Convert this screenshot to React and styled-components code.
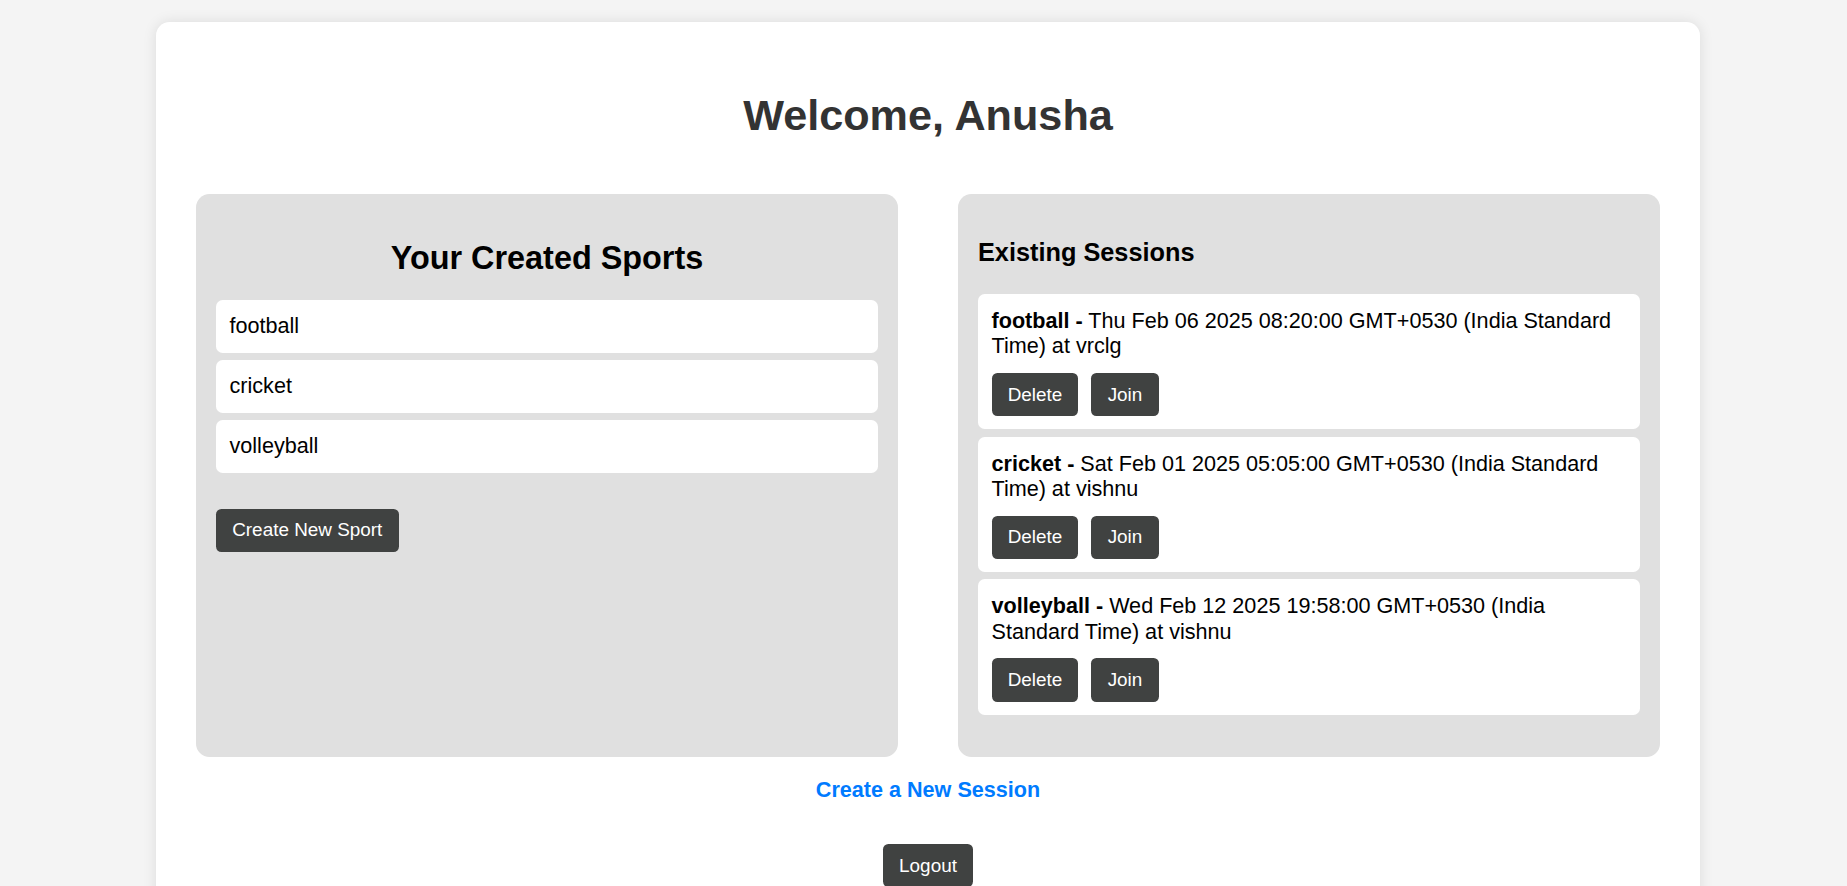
import styled, { createGlobalStyle } from "styled-components";

const GlobalStyle = createGlobalStyle`
  body {
    margin: 0;
    background: #f4f4f4;
    font-family: "Liberation Sans", Arial, sans-serif;
    font-size: 21.6px;
    line-height: 24.8px;
    color: #000;
  }
`;

const Card = styled.div`
  margin: 22px 147px 0 156px;
  padding: 40px;
  background: #fff;
  border-radius: 13.5px;
  box-shadow: 0 0 14px rgba(0, 0, 0, 0.1);
`;

const Title = styled.h1`
  margin: 29px 0 0;
  font-size: 43.2px;
  line-height: 49.6px;
  color: #333;
  text-align: center;
`;

const Columns = styled.div`
  display: flex;
  gap: 60px;
  margin-top: 53.4px;
`;

const Panel = styled.section`
  flex: 1;
  min-width: 0;
  background: #e0e0e0;
  border-radius: 13.5px;
  padding: 20px;
`;

const PanelTitle = styled.h2`
  margin: 26.4px 0 22.7px;
  font-size: 32.4px;
  line-height: 37.2px;
  text-align: center;
`;

const SubTitle = styled.h3`
  margin: 24.4px 0 26.5px;
  font-size: 25.3px;
  line-height: 29px;
`;

const SportList = styled.ul`
  list-style: none;
  margin: 0;
  padding: 0;
`;

const SportItem = styled.li`
  background: #fff;
  border-radius: 6.75px;
  padding: 14px 13.5px;
  margin-bottom: 7.2px;
`;

const Button = styled.button`
  background: #404241;
  color: #fff;
  border: none;
  border-radius: 5.4px;
  padding: 10.8px 16.2px;
  font-family: "Liberation Sans", Arial, sans-serif;
  font-size: 18.9px;
  line-height: 21.7px;
  cursor: pointer;
  margin-top: ${p => p.$top || 0}px;
`;

const SessionList = styled.div`
  padding-bottom: 14.5px;
`;

const Session = styled.div`
  background: #fff;
  border-radius: 6.75px;
  padding: 14px 13.5px 13px;
  margin-bottom: 7.5px;
`;

const SessionText = styled.div`
  line-height: 25.5px;
`;

const Actions = styled.div`
  display: flex;
  gap: 13px;
  margin-top: 14px;
`;

const NewSessionLink = styled.a`
  display: block;
  margin-top: 21.5px;
  text-align: center;
  font-weight: bold;
  color: #007bff;
  text-decoration: none;
  cursor: pointer;
`;

const Footer = styled.div`
  display: flex;
  justify-content: center;
  margin-top: 41px;
`;

const sports = ["football", "cricket", "volleyball"];

const sessions = [
  { sport: "football", date: "Thu Feb 06 2025 08:20:00 GMT+0530 (India Standard Time)", place: "vrclg" },
  { sport: "cricket", date: "Sat Feb 01 2025 05:05:00 GMT+0530 (India Standard Time)", place: "vishnu" },
  { sport: "volleyball", date: "Wed Feb 12 2025 19:58:00 GMT+0530 (India Standard Time)", place: "vishnu" },
];

export default function App() {
  return (
    <>
      <GlobalStyle />
      <Card>
        <Title>Welcome, Anusha</Title>
        <Columns>
          <Panel>
            <PanelTitle>Your Created Sports</PanelTitle>
            <SportList>
              {sports.map(s => (
                <SportItem key={s}>{s}</SportItem>
              ))}
            </SportList>
            <Button $top={28.3}>Create New Sport</Button>
          </Panel>
          <Panel>
            <SubTitle>Existing Sessions</SubTitle>
            <SessionList>
              {sessions.map(s => (
                <Session key={s.sport}>
                  <SessionText>
                    <strong>{s.sport} -</strong> {s.date} at {s.place}
                  </SessionText>
                  <Actions>
                    <Button>Delete</Button>
                    <Button>Join</Button>
                  </Actions>
                </Session>
              ))}
            </SessionList>
          </Panel>
        </Columns>
        <NewSessionLink>Create a New Session</NewSessionLink>
        <Footer>
          <Button>Logout</Button>
        </Footer>
      </Card>
    </>
  );
}
